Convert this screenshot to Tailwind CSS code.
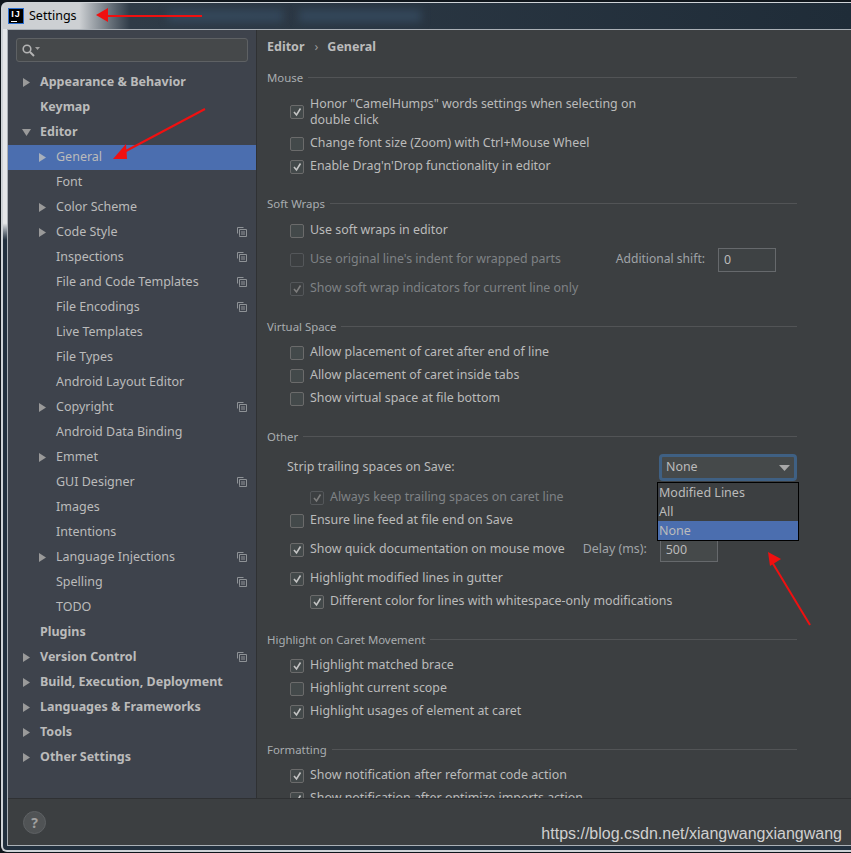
<!DOCTYPE html>
<html>
<head>
<meta charset="utf-8">
<script src="https://cdn.jsdelivr.net/npm/@tailwindcss/browser@4"></script>
</head>
<body class="w-[851px] h-[853px] overflow-hidden bg-[#10161c] font-['Noto_Sans',sans-serif] text-[12.5px] text-[#bbbbbb]">
<div class="relative w-[851px] h-[853px] overflow-hidden flex flex-col">
  <div class="flex-1 min-h-0 flex flex-col mt-[2px] mb-[1px] ml-[1px] rounded-tl-[6px] rounded-bl-[6px] border-t border-l-2 border-b-2 border-[#cfd3d7] overflow-hidden bg-gradient-to-b from-[#e4e6e8] from-[26%] to-[#22303e] to-[28%]">
  <!-- title bar -->
  <div class="relative h-[26px] flex items-center pl-[5px] bg-gradient-to-r from-[#cdd0d3] from-[9%] via-[#2f3b47] via-[15%] to-[#1f2c38] shrink-0 overflow-hidden">
    <div class="absolute left-[165px] top-[7px] w-[115px] h-[12px] bg-[#34485c] blur-[4px]"></div>
    <div class="absolute left-[296px] top-[7px] w-[122px] h-[12px] bg-[#34485c] blur-[4px]"></div>
    <div class="relative w-[16px] h-[16px] bg-black border border-[#2b6fd1] text-white font-['Liberation_Sans',sans-serif] text-[9px] font-bold leading-[10px] text-center tracking-[1px]">IJ<div class="absolute left-[2px] bottom-[1px] w-[6px] h-px bg-white"></div></div>
    <span class="relative ml-[5px] text-[12.5px] text-black">Settings</span>
  </div>
  <!-- window body -->
  <div class="ml-[4px] flex-1 mb-[4px] flex flex-col border-l border-t border-b border-[#aab0b6] min-h-0 bg-[#3c3f41]">
    <div class="flex-1 flex min-h-0">
      <!-- sidebar -->
      <div class="w-[249px] shrink-0 bg-[#3e434c] border-r border-[#2f3133] pt-[8px]">
        <div class="mx-[8px] h-[24px] bg-[#45484a] border border-[#5e6164] rounded-[3px] flex items-center pl-[4px]">
          <svg width="20" height="14" viewBox="0 0 20 14" fill="none"><circle cx="6" cy="6" r="3.8" stroke="#b4b4b4" stroke-width="1.6"/><path d="M9 9l4 4" stroke="#b4b4b4" stroke-width="2"/><path d="M14 4h5l-2.500 3z" fill="#a0a0a0"/></svg>
        </div>
        <div class="mt-[8px] flex flex-col">
          <div class="h-[25px] flex items-center font-bold pl-[32px] relative"><svg class="absolute left-[14px] top-[7px]" width="9" height="11" viewBox="0 0 9 11"><path d="M1 1l7 4.500-7 4.500z" fill="#9a9a9a"/></svg>Appearance &amp; Behavior</div>
          <div class="h-[25px] flex items-center font-bold pl-[32px]">Keymap</div>
          <div class="h-[25px] flex items-center font-bold pl-[32px] relative"><svg class="absolute left-[13px] top-[8px]" width="11" height="9" viewBox="0 0 11 9"><path d="M1 1h9l-4.500 7z" fill="#9a9a9a"/></svg>Editor</div>
          <div class="h-[25px] flex items-center pl-[48px] relative bg-[#4b6eaf]"><svg class="absolute left-[30px] top-[7px]" width="9" height="11" viewBox="0 0 9 11"><path d="M1 1l7 4.500-7 4.500z" fill="#a8b0bc"/></svg>General</div>
          <div class="h-[25px] flex items-center pl-[48px]">Font</div>
          <div class="h-[25px] flex items-center pl-[48px] relative"><svg class="absolute left-[30px] top-[7px]" width="9" height="11" viewBox="0 0 9 11"><path d="M1 1l7 4.500-7 4.500z" fill="#9a9a9a"/></svg>Color Scheme</div>
          <div class="h-[25px] flex items-center pl-[48px] relative"><svg class="absolute left-[30px] top-[7px]" width="9" height="11" viewBox="0 0 9 11"><path d="M1 1l7 4.500-7 4.500z" fill="#9a9a9a"/></svg>Code Style<svg class="absolute left-[229px] top-[7px]" width="10" height="10" viewBox="0 0 10 10" fill="none" stroke="#8e9296"><path d="M.5 6.500V.500h6M2.500 8.500V2.500h7v7h-7zM4 5h4M4 7h4"/></svg></div>
          <div class="h-[25px] flex items-center pl-[48px] relative">Inspections<svg class="absolute left-[229px] top-[7px]" width="10" height="10" viewBox="0 0 10 10" fill="none" stroke="#8e9296"><path d="M.5 6.500V.500h6M2.500 8.500V2.500h7v7h-7zM4 5h4M4 7h4"/></svg></div>
          <div class="h-[25px] flex items-center pl-[48px] relative">File and Code Templates<svg class="absolute left-[229px] top-[7px]" width="10" height="10" viewBox="0 0 10 10" fill="none" stroke="#8e9296"><path d="M.5 6.500V.500h6M2.500 8.500V2.500h7v7h-7zM4 5h4M4 7h4"/></svg></div>
          <div class="h-[25px] flex items-center pl-[48px] relative">File Encodings<svg class="absolute left-[229px] top-[7px]" width="10" height="10" viewBox="0 0 10 10" fill="none" stroke="#8e9296"><path d="M.5 6.500V.500h6M2.500 8.500V2.500h7v7h-7zM4 5h4M4 7h4"/></svg></div>
          <div class="h-[25px] flex items-center pl-[48px]">Live Templates</div>
          <div class="h-[25px] flex items-center pl-[48px]">File Types</div>
          <div class="h-[25px] flex items-center pl-[48px]">Android Layout Editor</div>
          <div class="h-[25px] flex items-center pl-[48px] relative"><svg class="absolute left-[30px] top-[7px]" width="9" height="11" viewBox="0 0 9 11"><path d="M1 1l7 4.500-7 4.500z" fill="#9a9a9a"/></svg>Copyright<svg class="absolute left-[229px] top-[7px]" width="10" height="10" viewBox="0 0 10 10" fill="none" stroke="#8e9296"><path d="M.5 6.500V.500h6M2.500 8.500V2.500h7v7h-7zM4 5h4M4 7h4"/></svg></div>
          <div class="h-[25px] flex items-center pl-[48px]">Android Data Binding</div>
          <div class="h-[25px] flex items-center pl-[48px] relative"><svg class="absolute left-[30px] top-[7px]" width="9" height="11" viewBox="0 0 9 11"><path d="M1 1l7 4.500-7 4.500z" fill="#9a9a9a"/></svg>Emmet</div>
          <div class="h-[25px] flex items-center pl-[48px] relative">GUI Designer<svg class="absolute left-[229px] top-[7px]" width="10" height="10" viewBox="0 0 10 10" fill="none" stroke="#8e9296"><path d="M.5 6.500V.500h6M2.500 8.500V2.500h7v7h-7zM4 5h4M4 7h4"/></svg></div>
          <div class="h-[25px] flex items-center pl-[48px]">Images</div>
          <div class="h-[25px] flex items-center pl-[48px]">Intentions</div>
          <div class="h-[25px] flex items-center pl-[48px] relative"><svg class="absolute left-[30px] top-[7px]" width="9" height="11" viewBox="0 0 9 11"><path d="M1 1l7 4.500-7 4.500z" fill="#9a9a9a"/></svg>Language Injections<svg class="absolute left-[229px] top-[7px]" width="10" height="10" viewBox="0 0 10 10" fill="none" stroke="#8e9296"><path d="M.5 6.500V.500h6M2.500 8.500V2.500h7v7h-7zM4 5h4M4 7h4"/></svg></div>
          <div class="h-[25px] flex items-center pl-[48px] relative">Spelling<svg class="absolute left-[229px] top-[7px]" width="10" height="10" viewBox="0 0 10 10" fill="none" stroke="#8e9296"><path d="M.5 6.500V.500h6M2.500 8.500V2.500h7v7h-7zM4 5h4M4 7h4"/></svg></div>
          <div class="h-[25px] flex items-center pl-[48px]">TODO</div>
          <div class="h-[25px] flex items-center font-bold pl-[32px]">Plugins</div>
          <div class="h-[25px] flex items-center font-bold pl-[32px] relative"><svg class="absolute left-[14px] top-[7px]" width="9" height="11" viewBox="0 0 9 11"><path d="M1 1l7 4.500-7 4.500z" fill="#9a9a9a"/></svg>Version Control<svg class="absolute left-[229px] top-[7px]" width="10" height="10" viewBox="0 0 10 10" fill="none" stroke="#8e9296"><path d="M.5 6.500V.500h6M2.500 8.500V2.500h7v7h-7zM4 5h4M4 7h4"/></svg></div>
          <div class="h-[25px] flex items-center font-bold pl-[32px] relative"><svg class="absolute left-[14px] top-[7px]" width="9" height="11" viewBox="0 0 9 11"><path d="M1 1l7 4.500-7 4.500z" fill="#9a9a9a"/></svg>Build, Execution, Deployment</div>
          <div class="h-[25px] flex items-center font-bold pl-[32px] relative"><svg class="absolute left-[14px] top-[7px]" width="9" height="11" viewBox="0 0 9 11"><path d="M1 1l7 4.500-7 4.500z" fill="#9a9a9a"/></svg>Languages &amp; Frameworks</div>
          <div class="h-[25px] flex items-center font-bold pl-[32px] relative"><svg class="absolute left-[14px] top-[7px]" width="9" height="11" viewBox="0 0 9 11"><path d="M1 1l7 4.500-7 4.500z" fill="#9a9a9a"/></svg>Tools</div>
          <div class="h-[25px] flex items-center font-bold pl-[32px] relative"><svg class="absolute left-[14px] top-[7px]" width="9" height="11" viewBox="0 0 9 11"><path d="M1 1l7 4.500-7 4.500z" fill="#9a9a9a"/></svg>Other Settings</div>
        </div>
      </div>
      <!-- content -->
      <div class="flex-1 min-w-0 overflow-hidden pl-[10px] pr-[54px] pt-[6px] text-[12.4px]">
        <div class="h-[23px] flex items-center font-bold text-[12.5px]"><span>Editor</span><span class="ml-[10px] mr-[9px] font-normal text-[#9a9a9a]">›</span><span>General</span></div>
        <!-- Mouse -->
        <div class="mt-[8px] h-[23px] pb-[2px] flex items-center gap-[5px] text-[11.4px] text-[#a9adb0]"><span>Mouse</span><div class="flex-1 h-px bg-[#525456]"></div></div>
        <div class="mt-[6px] ml-[23px] flex items-center gap-[6px]">
          <div class="w-[14px] h-[14px] border border-[#6b6b6b] rounded-[2px] bg-[#43494a] flex items-center justify-center"><svg width="10" height="10" viewBox="0 0 10 10" fill="none"><path d="M2 5l2.500 3L8.500 1.500" stroke="#c4c4c4" stroke-width="1.600"/></svg></div>
          <div class="w-[340px] leading-[16px]">Honor "CamelHumps" words settings when selecting on double click</div>
        </div>
        <div class="mt-[4px] ml-[23px] h-[23px] flex items-center gap-[6px]"><div class="w-[14px] h-[14px] border border-[#6b6b6b] rounded-[2px] bg-[#43494a]"></div><span>Change font size (Zoom) with Ctrl+Mouse Wheel</span></div>
        <div class="ml-[23px] h-[23px] flex items-center gap-[6px]"><div class="w-[14px] h-[14px] border border-[#6b6b6b] rounded-[2px] bg-[#43494a] flex items-center justify-center"><svg width="10" height="10" viewBox="0 0 10 10" fill="none"><path d="M2 5l2.500 3L8.500 1.500" stroke="#c4c4c4" stroke-width="1.600"/></svg></div><span>Enable Drag'n'Drop functionality in editor</span></div>
        <!-- Soft Wraps -->
        <div class="mt-[15px] h-[23px] pb-[2px] flex items-center gap-[5px] text-[11.4px] text-[#a9adb0]"><span>Soft Wraps</span><div class="flex-1 h-px bg-[#525456]"></div></div>
        <div class="mt-[3px] ml-[23px] h-[23px] flex items-center gap-[6px]"><div class="w-[14px] h-[14px] border border-[#6b6b6b] rounded-[2px] bg-[#43494a]"></div><span>Use soft wraps in editor</span></div>
        <div class="mt-[6px] ml-[23px] h-[23px] flex items-center gap-[6px] text-[#7f8285]"><div class="w-[14px] h-[14px] border border-[#54575a] rounded-[2px]"></div><span>Use original line's indent for wrapped parts</span><span class="ml-auto mr-[21px] flex items-center gap-[13px] text-[#a0a4a8] text-[12.1px]">Additional shift:<span class="w-[58px] h-[24px] border border-[#66696c] bg-[#3e4244] text-[#bbb] text-[12.4px] pl-[5px] leading-[22px]">0</span></span></div>
        <div class="mt-[6px] ml-[23px] h-[23px] flex items-center gap-[6px] text-[#7f8285]"><div class="w-[14px] h-[14px] border border-[#54575a] rounded-[2px] flex items-center justify-center"><svg width="10" height="10" viewBox="0 0 10 10" fill="none"><path d="M2 5l2.500 3L8.500 1.500" stroke="#7d7d7d" stroke-width="1.600"/></svg></div><span>Show soft wrap indicators for current line only</span></div>
        <!-- Virtual Space -->
        <div class="mt-[16px] h-[23px] pb-[2px] flex items-center gap-[5px] text-[11.4px] text-[#a9adb0]"><span>Virtual Space</span><div class="flex-1 h-px bg-[#525456]"></div></div>
        <div class="mt-[2px] ml-[23px] h-[23px] flex items-center gap-[6px]"><div class="w-[14px] h-[14px] border border-[#6b6b6b] rounded-[2px] bg-[#43494a]"></div><span>Allow placement of caret after end of line</span></div>
        <div class="ml-[23px] h-[23px] flex items-center gap-[6px]"><div class="w-[14px] h-[14px] border border-[#6b6b6b] rounded-[2px] bg-[#43494a]"></div><span>Allow placement of caret inside tabs</span></div>
        <div class="ml-[23px] h-[23px] flex items-center gap-[6px]"><div class="w-[14px] h-[14px] border border-[#6b6b6b] rounded-[2px] bg-[#43494a]"></div><span>Show virtual space at file bottom</span></div>
        <!-- Other -->
        <div class="mt-[16px] h-[23px] pb-[2px] flex items-center gap-[5px] text-[11.4px] text-[#a9adb0]"><span>Other</span><div class="flex-1 h-px bg-[#525456]"></div></div>
        <div class="mt-[7px] ml-[20px] h-[23px] flex items-center justify-between"><span class="text-[12.5px]">Strip trailing spaces on Save:</span>
          <div class="shrink-0 w-[138px] h-[27px] border-[3px] border-[#3f6083] rounded-[4px] flex items-center justify-between pl-[4px] pr-[4px] bg-[#45494a]"><span>None</span><svg width="11" height="6" viewBox="0 0 11 6"><path d="M0 0h11L5.500 6z" fill="#a8a8a8"/></svg></div></div>
        <div class="mt-[7px] ml-[43px] h-[23px] flex items-center gap-[6px] text-[#7f8285]"><div class="w-[14px] h-[14px] border border-[#54575a] rounded-[2px] flex items-center justify-center"><svg width="10" height="10" viewBox="0 0 10 10" fill="none"><path d="M2 5l2.500 3L8.500 1.500" stroke="#7d7d7d" stroke-width="1.600"/></svg></div><span>Always keep trailing spaces on caret line</span></div>
        <div class="ml-[23px] h-[23px] flex items-center gap-[6px]"><div class="w-[14px] h-[14px] border border-[#6b6b6b] rounded-[2px] bg-[#43494a]"></div><span>Ensure line feed at file end on Save</span></div>
        <div class="mt-[6px] ml-[23px] h-[23px] flex items-center gap-[6px]"><div class="w-[14px] h-[14px] border border-[#6b6b6b] rounded-[2px] bg-[#43494a] flex items-center justify-center"><svg width="10" height="10" viewBox="0 0 10 10" fill="none"><path d="M2 5l2.500 3L8.500 1.500" stroke="#c4c4c4" stroke-width="1.600"/></svg></div><span>Show quick documentation on mouse move</span><span class="ml-[12px] text-[#a0a4a8]">Delay (ms):</span><span class="ml-[7px] w-[58px] h-[24px] border border-[#66696c] bg-[#45494a] pl-[5px] leading-[22px]">500</span></div>
        <div class="mt-[6px] ml-[23px] h-[23px] flex items-center gap-[6px]"><div class="w-[14px] h-[14px] border border-[#6b6b6b] rounded-[2px] bg-[#43494a] flex items-center justify-center"><svg width="10" height="10" viewBox="0 0 10 10" fill="none"><path d="M2 5l2.500 3L8.500 1.500" stroke="#c4c4c4" stroke-width="1.600"/></svg></div><span>Highlight modified lines in gutter</span></div>
        <div class="ml-[43px] h-[23px] flex items-center gap-[6px]"><div class="w-[14px] h-[14px] border border-[#6b6b6b] rounded-[2px] bg-[#43494a] flex items-center justify-center"><svg width="10" height="10" viewBox="0 0 10 10" fill="none"><path d="M2 5l2.500 3L8.500 1.500" stroke="#c4c4c4" stroke-width="1.600"/></svg></div><span>Different color for lines with whitespace-only modifications</span></div>
        <!-- Highlight on Caret Movement -->
        <div class="mt-[16px] h-[23px] pb-[2px] flex items-center gap-[5px] text-[11.4px] text-[#a9adb0]"><span>Highlight on Caret Movement</span><div class="flex-1 h-px bg-[#525456]"></div></div>
        <div class="mt-[2px] ml-[23px] h-[23px] flex items-center gap-[6px]"><div class="w-[14px] h-[14px] border border-[#6b6b6b] rounded-[2px] bg-[#43494a] flex items-center justify-center"><svg width="10" height="10" viewBox="0 0 10 10" fill="none"><path d="M2 5l2.500 3L8.500 1.500" stroke="#c4c4c4" stroke-width="1.600"/></svg></div><span>Highlight matched brace</span></div>
        <div class="ml-[23px] h-[23px] flex items-center gap-[6px]"><div class="w-[14px] h-[14px] border border-[#6b6b6b] rounded-[2px] bg-[#43494a]"></div><span>Highlight current scope</span></div>
        <div class="ml-[23px] h-[23px] flex items-center gap-[6px]"><div class="w-[14px] h-[14px] border border-[#6b6b6b] rounded-[2px] bg-[#43494a] flex items-center justify-center"><svg width="10" height="10" viewBox="0 0 10 10" fill="none"><path d="M2 5l2.500 3L8.500 1.500" stroke="#c4c4c4" stroke-width="1.600"/></svg></div><span>Highlight usages of element at caret</span></div>
        <!-- Formatting -->
        <div class="mt-[16px] h-[23px] pb-[2px] flex items-center gap-[5px] text-[11.4px] text-[#a9adb0]"><span>Formatting</span><div class="flex-1 h-px bg-[#525456]"></div></div>
        <div class="mt-[2px] ml-[23px] h-[23px] flex items-center gap-[6px]"><div class="w-[14px] h-[14px] border border-[#6b6b6b] rounded-[2px] bg-[#43494a] flex items-center justify-center"><svg width="10" height="10" viewBox="0 0 10 10" fill="none"><path d="M2 5l2.500 3L8.500 1.500" stroke="#c4c4c4" stroke-width="1.600"/></svg></div><span>Show notification after reformat code action</span></div>
        <div class="ml-[23px] h-[23px] flex items-center gap-[6px]"><div class="w-[14px] h-[14px] border border-[#6b6b6b] rounded-[2px] bg-[#43494a] flex items-center justify-center"><svg width="10" height="10" viewBox="0 0 10 10" fill="none"><path d="M2 5l2.500 3L8.500 1.500" stroke="#c4c4c4" stroke-width="1.600"/></svg></div><span>Show notification after optimize imports action</span></div>
      </div>
    </div>
    <!-- footer -->
    <div class="h-[47px] shrink-0 border-t border-[#2f3133] bg-[#3c3f41] flex items-start pt-[12px] pl-[15px]">
      <div class="w-[23px] h-[23px] rounded-full bg-[#505355] border border-[#5e6164] flex items-center justify-center text-[14px] font-bold text-[#a0a0a0]">?</div>
    </div>
  </div>
  </div>
  <!-- dropdown popup -->
  <div class="absolute left-[657px] top-[482px] w-[142px] h-[59px] border border-black bg-[#3c3f41] leading-[19px]">
    <div class="pl-[1px] h-[19px]">Modified Lines</div>
    <div class="pl-[1px] h-[19px]">All</div>
    <div class="pl-[1px] h-[19px] bg-[#4b6eaf]">None</div>
  </div>
  <!-- watermark -->
  <div class="absolute right-[9px] top-[824px] font-['Liberation_Sans',sans-serif] text-[16px] leading-[20px] text-[#d0d0d0]">https://blog.csdn.net/xiangwangxiangwang</div>
  <!-- red arrows -->
  <svg class="absolute left-0 top-0 pointer-events-none" width="851" height="853" viewBox="0 0 851 853" fill="none">
    <path d="M202 16H108" stroke="#f01010" stroke-width="2"/><path d="M96 15l12-7v14z" fill="#f01010"/>
    <path d="M205 109L124 152" stroke="#f01010" stroke-width="2"/><path d="M113 159l13-15 1 15z" fill="#f01010"/>
    <path d="M810 625L772 562" stroke="#f01010" stroke-width="2"/><path d="M768 552l13 7-11 7z" fill="#f01010"/>
  </svg>
</div>
</body>
</html>
